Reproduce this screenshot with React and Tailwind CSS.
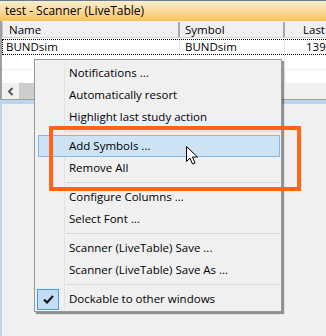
import React from "react";

const font = { fontFamily: '"Segoe UI", "Open Sans", "Liberation Sans", sans-serif' };

function Gutter({ children }) {
  return (
    <div className="w-[30px] shrink-0 self-stretch border-r border-[#e2e2e2] flex items-center">
      {children}
    </div>
  );
}

function Item({ label }) {
  return (
    <div className="flex h-[22px]">
      <Gutter />
      <div className="pl-[4px] flex items-center text-[11.5px] text-black">{label}</div>
    </div>
  );
}

function Sep() {
  return (
    <div className="flex h-[7px]">
      <Gutter />
      <div className="flex-1 flex items-center pl-[1px] pr-[1px]">
        <div className="h-px w-full bg-[#d8d8d8]" />
      </div>
    </div>
  );
}

function HotItem({ label }) {
  return (
    <div className="ml-[3px] mr-[1px] h-[22px] bg-[#cce3f6] border border-[#85b8e7] flex items-center pl-[30px] text-[11.5px] text-black">
      {label}
    </div>
  );
}

function CheckItem({ label }) {
  return (
    <div className="flex h-[22px]">
      <Gutter>
        <div className="ml-[2px] w-[22px] h-[21px] bg-[#c3def4] border border-[#3e9de6] flex items-center justify-center">
          <svg width="11" height="9" viewBox="0 0 11 9">
            <path d="M1 4.5 L4 7.5 L10 1" stroke="#1a1a1a" strokeWidth="2.2" fill="none" />
          </svg>
        </div>
      </Gutter>
      <div className="pl-[4px] flex items-center text-[11.5px] text-black">{label}</div>
    </div>
  );
}

export default function App() {
  return (
    <div className="w-[326px] h-[336px] relative overflow-hidden bg-[#f0f0f0] flex flex-col" style={font}>
      {/* title bar */}
      <div className="h-[21px] shrink-0 border-t border-[#6d7b8f] bg-gradient-to-b from-[#fdefd0] to-[#f7c25c] flex items-center pl-[5px] text-[12px] text-black">
        test - Scanner (LiveTable)
      </div>
      {/* table window */}
      <div className="h-[79px] shrink-0 flex flex-col border-l-2 border-b border-[#a0a0a0] bg-white">
        <div className="h-px bg-[#f4f4f4]" />
        <div className="h-[16px] flex bg-[#f0f0f0] border-b border-[#d5d5d5] text-[11.5px] text-black">
          <div className="w-[178px] pl-[6px] flex items-center border-r-2 border-[#a8a8a8] border-l border-l-[#c8c8c8]">Name</div>
          <div className="w-[105px] pl-[5px] flex items-center border-r-2 border-[#a8a8a8]">Symbol</div>
          <div className="flex-1 min-w-0 overflow-hidden whitespace-nowrap flex items-center pl-[18px]">Last</div>
        </div>
        <div className="h-[16px] flex border-b border-dotted border-t border-black text-[11.5px] text-black mt-[1px] border-l border-r-0">
          <div className="w-[177px] pl-[3px] flex items-center border-r border-[#e6e6e6]">BUNDsim</div>
          <div className="w-[105px] pl-[5px] flex items-center border-r border-[#e6e6e6]">BUNDsim</div>
          <div className="flex-1 min-w-0 overflow-hidden whitespace-nowrap flex items-center pl-[21px]">139.55</div>
        </div>
        <div className="h-[15px] flex border-b border-[#eeeeee]">
          <div className="w-[178px] border-r border-[#e6e6e6]" />
          <div className="w-[105px] border-r border-[#e6e6e6]" />
        </div>
        <div className="flex-1 flex">
          <div className="w-[178px] border-r border-[#e6e6e6]" />
          <div className="w-[105px] border-r border-[#e6e6e6]" />
        </div>
        <div className="h-[16px] shrink-0 flex bg-[#f0f0f0]">
          <div className="w-[17px] flex items-center justify-center">
            <svg width="7" height="9" viewBox="0 0 7 9">
              <path d="M5.5 1 L2 4.5 L5.5 8" stroke="#505050" strokeWidth="1.8" fill="none" />
            </svg>
          </div>
          <div className="w-[160px] bg-[#cdcdcd]" />
        </div>
      </div>
      {/* lower window */}
      <div className="h-[4px] shrink-0 bg-[#bcd5ef]" />
      <div className="flex-1 border-l-2 border-[#bcd5ef] bg-[#f0f0f0]" />

      {/* context menu */}
      <div className="absolute left-[34px] top-[59px] w-[248px] h-[253px] bg-[#f0f0f0] border border-[#979797] shadow-[2px_2px_1px_rgba(0,0,0,0.4)] pt-[2px] flex flex-col">
        <Item label="Notifications ..." />
        <Item label="Automatically resort" />
        <Item label="Highlight last study action" />
        <Sep />
        <HotItem label="Add Symbols ..." />
        <Item label="Remove All" />
        <Sep />
        <Item label="Configure Columns ..." />
        <Item label="Select Font ..." />
        <Sep />
        <Item label="Scanner (LiveTable) Save ..." />
        <Item label="Scanner (LiveTable) Save As ..." />
        <Sep />
        <CheckItem label="Dockable to other windows" />
      </div>

      {/* annotation rectangle */}
      <div className="absolute left-[49px] top-[126px] w-[252px] h-[65px] border-4 border-[#ff6417]" />

      {/* mouse cursor */}
      <svg className="absolute left-[186px] top-[146px]" width="13" height="20" viewBox="0 0 13 20">
        <path d="M0.5 0.5 L0.5 15.5 L4 12 L6.5 18 L9 17 L6.5 11 L11.5 11 Z" fill="white" stroke="black" strokeWidth="1" strokeLinejoin="miter" />
      </svg>
    </div>
  );
}
